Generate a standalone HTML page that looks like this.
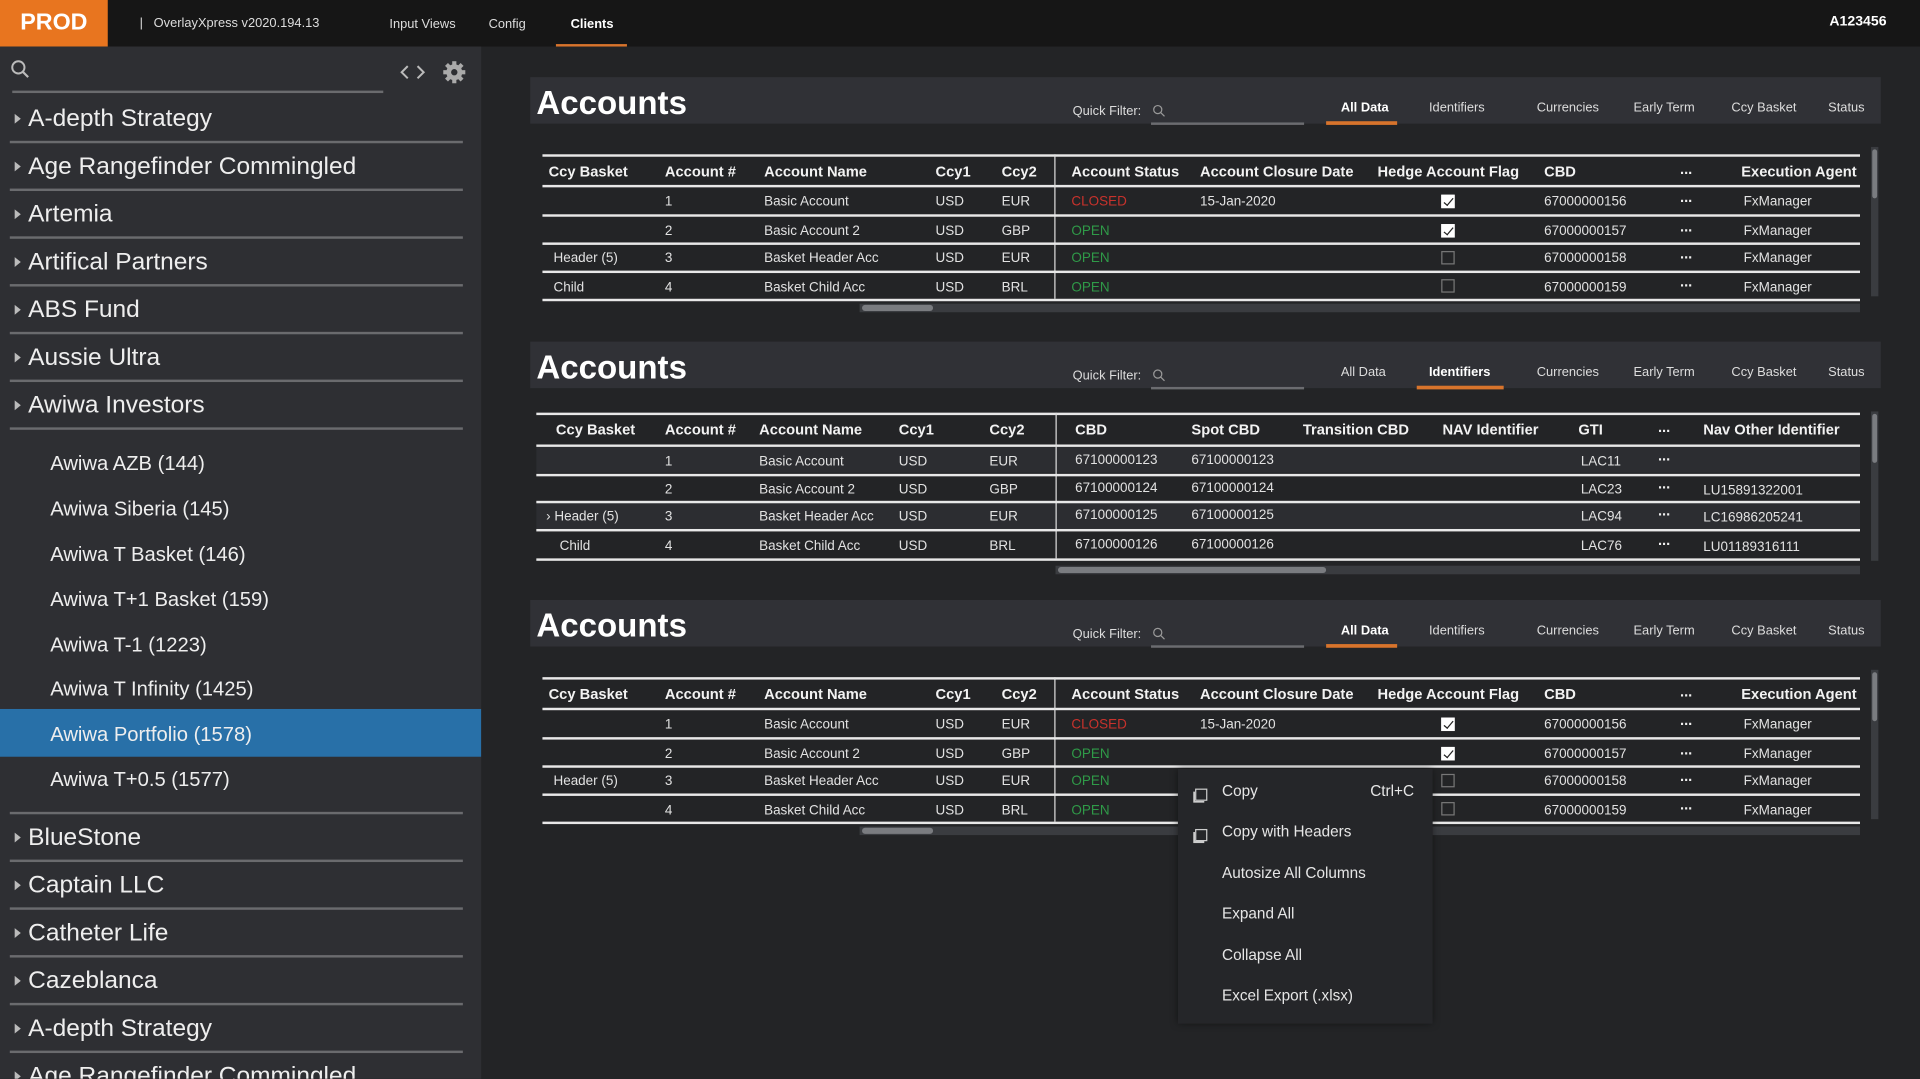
<!DOCTYPE html>
<html><head><meta charset="utf-8">
<style>
html,body{margin:0;padding:0;background:#232426;width:1920px;height:1078px;overflow:hidden}
#w{position:absolute;left:0;top:0;width:1568px;height:881px;transform:scale(1.22449);transform-origin:0 0;font-family:"Liberation Sans",sans-serif;color:#e6e6e6;background:#232426}
.a{position:absolute;white-space:nowrap}
#hdr{position:absolute;left:0;top:0;width:1568px;height:38px;background:#161616}
#prod{position:absolute;left:0;top:0;width:88px;height:38px;background:#e8751f;color:#fff;font-weight:bold;font-size:19px;line-height:38px;text-align:center}
#side{position:absolute;left:0;top:38px;width:393px;height:843px;background:#2e2f33;overflow:hidden}
.ti{position:absolute;left:23px;font-size:20px;color:#eee;margin-top:3px}
.tri{position:absolute;left:12px;width:0;height:0;border-left:5px solid #bbb;border-top:4px solid transparent;border-bottom:4px solid transparent}
.sl{position:absolute;left:8px;width:370px;height:2px;background:#6a6b6e}
.ch{position:absolute;left:41px;font-size:16.5px;color:#eee;margin-top:2px}
.pt{position:absolute;left:433px;width:1103px;height:38px;background:#303136}
.pt .h{position:absolute;left:5px;top:6px;font-size:27px;font-weight:bold;color:#fff}
.pt .qf{position:absolute;left:443px;top:22px;font-size:10.5px;color:#ddd}
.pt .ul{position:absolute;left:507px;top:37px;width:125px;height:2px;background:#6b6c70}
.pt .tab{position:absolute;top:19px;font-size:10.5px;color:#ddd}
.pt .sel{font-weight:bold;color:#fff}
.pt .bar{position:absolute;top:36px;height:3px;background:#d8742c}
.hr{position:absolute;height:1.5px;background:#e8e8e8}
.th{position:absolute;font-size:12px;font-weight:bold;color:#f2f2f2;margin-top:1px}
.td{position:absolute;font-size:11px;color:#e2e2e2;margin-top:1px}
.red{color:#c8322c}.grn{color:#2f9a48}
.cb{position:absolute;width:11px;height:11px;border:1px solid #777;box-sizing:border-box}
.cbk{background:#fff;border-color:#fff}
.cbk:after{content:"";position:absolute;left:3px;top:0px;width:3px;height:7px;border:solid #222;border-width:0 1.5px 1.5px 0;transform:rotate(40deg)}
.vs{position:absolute;width:1px;background:#ddd}
.hs{position:absolute;height:7px;background:#3a3c40}
.hs i{position:absolute;top:1px;height:5px;background:#7a7c80;border-radius:3px}
.vsb{position:absolute;width:6px;background:#3a3c40}
.vsb i{position:absolute;left:1px;top:2px;width:4px;height:40px;background:#7a7c80;border-radius:2px}
#menu{position:absolute;left:962px;top:628px;width:208px;height:208px;background:#252629;box-shadow:0 0 6px rgba(0,0,0,.5)}
#menu .m{position:absolute;left:36px;font-size:12.5px;color:#e6e6e6}
#menu .ic{position:absolute;left:14px;width:8px;height:8px;border:1.2px solid #ccc;box-shadow:-2px 2px 0 -0.5px #ccc}
.dots{position:absolute;font-size:12px;font-weight:bold;color:#eee;letter-spacing:0px}
</style></head><body><div id="w">
<div id="hdr">
<div id="prod">PROD</div>
<div class="a" style="left:114px;top:13px;font-size:10.5px;color:#ddd">|&nbsp;&nbsp;&nbsp;OverlayXpress v2020.194.13</div>
<div class="a" style="left:318px;top:14px;font-size:10.5px;color:#ddd">Input Views</div>
<div class="a" style="left:399px;top:14px;font-size:10.5px;color:#ddd">Config</div>
<div class="a" style="left:466px;top:14px;font-size:10.5px;color:#fff;font-weight:bold">Clients</div>
<div class="a" style="left:454px;top:36px;width:58px;height:2px;background:#d8742c"></div>
<div class="a" style="left:1494px;top:12px;font-size:11.5px;color:#fff;font-weight:bold">A123456</div>
</div>
<div id="side">
<svg class="a" style="left:8px;top:10px" width="18" height="18" viewBox="0 0 18 18"><circle cx="7" cy="7" r="5" stroke="#bbb" stroke-width="1.6" fill="none"/><path d="M10.5 10.5L15 15" stroke="#bbb" stroke-width="1.8"/></svg>
<div class="a" style="left:10px;top:36px;width:303px;height:2px;background:#6a6b6e"></div>
<svg class="a" style="left:325px;top:14px" width="24" height="14" viewBox="0 0 24 14"><path d="M8 2L3 7L8 12M16 2L21 7L16 12" stroke="#bbb" stroke-width="1.6" fill="none"/></svg>
<svg class="a" style="left:361px;top:11px" width="20" height="20" viewBox="0 0 20 20"><g fill="#aaa"><circle cx="10" cy="10" r="6.5"/><rect x="8.3" y="1" width="3.4" height="18"/><rect x="1" y="8.3" width="18" height="3.4"/><rect x="8.3" y="1" width="3.4" height="18" transform="rotate(45 10 10)"/><rect x="8.3" y="1" width="3.4" height="18" transform="rotate(-45 10 10)"/></g><circle cx="10" cy="10" r="2.6" fill="#2e2f33"/></svg>
<div class="tri" style="top:55px"></div><div class="ti" style="top:45px">A-depth Strategy</div><div class="sl" style="top:77px"></div>
<div class="tri" style="top:94px"></div><div class="ti" style="top:84px">Age Rangefinder Commingled</div><div class="sl" style="top:116px"></div>
<div class="tri" style="top:133px"></div><div class="ti" style="top:123px">Artemia</div><div class="sl" style="top:155px"></div>
<div class="tri" style="top:172px"></div><div class="ti" style="top:162px">Artifical Partners</div><div class="sl" style="top:194px"></div>
<div class="tri" style="top:211px"></div><div class="ti" style="top:201px">ABS Fund</div><div class="sl" style="top:233px"></div>
<div class="tri" style="top:250px"></div><div class="ti" style="top:240px">Aussie Ultra</div><div class="sl" style="top:272px"></div>
<div class="tri" style="top:289px"></div><div class="ti" style="top:279px">Awiwa Investors</div><div class="sl" style="top:311px"></div>
<div class="ch" style="top:330px">Awiwa AZB (144)</div>
<div class="ch" style="top:367px">Awiwa Siberia (145)</div>
<div class="ch" style="top:404px">Awiwa T Basket (146)</div>
<div class="ch" style="top:441px">Awiwa T+1 Basket (159)</div>
<div class="ch" style="top:478px">Awiwa T-1 (1223)</div>
<div class="ch" style="top:514px">Awiwa T Infinity (1425)</div>
<div class="a" style="left:0;top:541px;width:393px;height:39px;background:#2870a8"></div>
<div class="ch" style="top:551px">Awiwa Portfolio (1578)</div>
<div class="ch" style="top:588px">Awiwa T+0.5 (1577)</div>
<div class="sl" style="top:625px"></div>
<div class="tri" style="top:642px"></div><div class="ti" style="top:632px">BlueStone</div><div class="sl" style="top:664px"></div>
<div class="tri" style="top:681px"></div><div class="ti" style="top:671px">Captain LLC</div><div class="sl" style="top:703px"></div>
<div class="tri" style="top:720px"></div><div class="ti" style="top:710px">Catheter Life</div><div class="sl" style="top:742px"></div>
<div class="tri" style="top:759px"></div><div class="ti" style="top:749px">Cazeblanca</div><div class="sl" style="top:781px"></div>
<div class="tri" style="top:798px"></div><div class="ti" style="top:788px">A-depth Strategy</div><div class="sl" style="top:820px"></div>
<div class="tri" style="top:837px"></div><div class="ti" style="top:827px">Age Rangefinder Commingled</div>
</div>

<!-- Panel 1 -->
<div class="pt" style="top:63px"><div class="h">Accounts</div><div class="qf">Quick Filter:</div>
<svg class="a" style="left:508px;top:22px" width="11" height="11" viewBox="0 0 11 11"><circle cx="4.5" cy="4.5" r="3.3" stroke="#999" fill="none"/><path d="M7 7L10 10" stroke="#999"/></svg>
<div class="ul"></div>
<div class="tab sel" style="left:662px">All Data</div><div class="bar" style="left:650px;width:58px"></div>
<div class="tab" style="left:734px">Identifiers</div><div class="tab" style="left:822px">Currencies</div><div class="tab" style="left:901px">Early Term</div><div class="tab" style="left:981px">Ccy Basket</div><div class="tab" style="left:1060px">Status</div></div>
<div class="hr" style="left:443px;top:126px;width:1076px"></div>
<div class="th" style="left:448px;top:132px">Ccy Basket</div><div class="th" style="left:543px;top:132px">Account #</div><div class="th" style="left:624px;top:132px">Account Name</div><div class="th" style="left:764px;top:132px">Ccy1</div><div class="th" style="left:818px;top:132px">Ccy2</div><div class="th" style="left:875px;top:132px">Account Status</div><div class="th" style="left:980px;top:132px">Account Closure Date</div><div class="th" style="left:1125px;top:132px">Hedge Account Flag</div><div class="th" style="left:1261px;top:132px">CBD</div><div class="dots" style="left:1372px;top:131px">...</div><div class="th" style="left:1422px;top:132px">Execution Agent</div>
<div class="hr" style="left:443px;top:151px;width:1076px"></div>
<div class="vs" style="left:861px;top:126px;height:118px"></div>
<div class="td" style="left:543px;top:158px">1</div><div class="td" style="left:624px;top:158px">Basic Account</div><div class="td" style="left:764px;top:158px">USD</div><div class="td" style="left:818px;top:158px">EUR</div><div class="td red" style="left:875px;top:158px">CLOSED</div><div class="td" style="left:980px;top:158px">15-Jan-2020</div><div class="cb cbk" style="left:1177px;top:159px"></div><div class="td" style="left:1261px;top:158px">67000000156</div><div class="dots" style="left:1372px;top:154px">...</div><div class="td" style="left:1424px;top:158px">FxManager</div>
<div class="hr" style="left:443px;top:175px;width:1076px"></div>
<div class="td" style="left:543px;top:182px">2</div><div class="td" style="left:624px;top:182px">Basic Account 2</div><div class="td" style="left:764px;top:182px">USD</div><div class="td" style="left:818px;top:182px">GBP</div><div class="td grn" style="left:875px;top:182px">OPEN</div><div class="cb cbk" style="left:1177px;top:183px"></div><div class="td" style="left:1261px;top:182px">67000000157</div><div class="dots" style="left:1372px;top:178px">...</div><div class="td" style="left:1424px;top:182px">FxManager</div>
<div class="hr" style="left:443px;top:198px;width:1076px"></div>
<div class="td" style="left:452px;top:204px">Header (5)</div><div class="td" style="left:543px;top:204px">3</div><div class="td" style="left:624px;top:204px">Basket Header Acc</div><div class="td" style="left:764px;top:204px">USD</div><div class="td" style="left:818px;top:204px">EUR</div><div class="td grn" style="left:875px;top:204px">OPEN</div><div class="cb" style="left:1177px;top:205px"></div><div class="td" style="left:1261px;top:204px">67000000158</div><div class="dots" style="left:1372px;top:200px">...</div><div class="td" style="left:1424px;top:204px">FxManager</div>
<div class="hr" style="left:443px;top:221px;width:1076px"></div>
<div class="td" style="left:452px;top:228px">Child</div><div class="td" style="left:543px;top:228px">4</div><div class="td" style="left:624px;top:228px">Basket Child Acc</div><div class="td" style="left:764px;top:228px">USD</div><div class="td" style="left:818px;top:228px">BRL</div><div class="td grn" style="left:875px;top:228px">OPEN</div><div class="cb" style="left:1177px;top:228px"></div><div class="td" style="left:1261px;top:228px">67000000159</div><div class="dots" style="left:1372px;top:223px">...</div><div class="td" style="left:1424px;top:228px">FxManager</div>
<div class="hr" style="left:443px;top:244px;width:1076px"></div>
<div class="hs" style="left:702px;top:248px;width:817px"><i style="left:2px;width:58px"></i></div>
<div class="vsb" style="left:1528px;top:120px;height:122px"><i></i></div>

<!-- Panel 2 -->
<div class="pt" style="top:279px"><div class="h">Accounts</div><div class="qf">Quick Filter:</div>
<svg class="a" style="left:508px;top:22px" width="11" height="11" viewBox="0 0 11 11"><circle cx="4.5" cy="4.5" r="3.3" stroke="#999" fill="none"/><path d="M7 7L10 10" stroke="#999"/></svg>
<div class="ul"></div>
<div class="tab" style="left:662px">All Data</div>
<div class="tab sel" style="left:734px">Identifiers</div><div class="bar" style="left:724px;width:71px"></div><div class="tab" style="left:822px">Currencies</div><div class="tab" style="left:901px">Early Term</div><div class="tab" style="left:981px">Ccy Basket</div><div class="tab" style="left:1060px">Status</div></div>
<div class="hr" style="left:438px;top:337px;width:1081px"></div>
<div class="th" style="left:454px;top:343px">Ccy Basket</div><div class="th" style="left:543px;top:343px">Account #</div><div class="th" style="left:620px;top:343px">Account Name</div><div class="th" style="left:734px;top:343px">Ccy1</div><div class="th" style="left:808px;top:343px">Ccy2</div><div class="th" style="left:878px;top:343px">CBD</div><div class="th" style="left:973px;top:343px">Spot CBD</div><div class="th" style="left:1064px;top:343px">Transition CBD</div><div class="th" style="left:1178px;top:343px">NAV Identifier</div><div class="th" style="left:1289px;top:343px">GTI</div><div class="dots" style="left:1354px;top:342px">...</div><div class="th" style="left:1391px;top:343px">Nav Other Identifier</div>
<div class="hr" style="left:438px;top:363px;width:1081px"></div>
<div class="a" style="left:438px;top:365px;width:1081px;height:21px;background:#2c2d31"></div>
<div class="a" style="left:438px;top:410px;width:1081px;height:22px;background:#2c2d31"></div>
<div class="vs" style="left:862px;top:337px;height:119px"></div>
<div class="td" style="left:543px;top:370px">1</div><div class="td" style="left:620px;top:370px">Basic Account</div><div class="td" style="left:734px;top:370px">USD</div><div class="td" style="left:808px;top:370px">EUR</div><div class="td" style="left:878px;top:369px">67100000123</div><div class="td" style="left:973px;top:369px">67100000123</div><div class="td" style="left:1291px;top:370px">LAC11</div><div class="dots" style="left:1354px;top:365px">...</div>
<div class="hr" style="left:438px;top:387px;width:1081px"></div>
<div class="td" style="left:543px;top:393px">2</div><div class="td" style="left:620px;top:393px">Basic Account 2</div><div class="td" style="left:734px;top:393px">USD</div><div class="td" style="left:808px;top:393px">GBP</div><div class="td" style="left:878px;top:392px">67100000124</div><div class="td" style="left:973px;top:392px">67100000124</div><div class="td" style="left:1291px;top:393px">LAC23</div><div class="dots" style="left:1354px;top:388px">...</div><div class="td" style="left:1391px;top:394px">LU15891322001</div>
<div class="hr" style="left:438px;top:409px;width:1081px"></div>
<div class="td" style="left:446px;top:415px">&#x203A; Header (5)</div><div class="td" style="left:543px;top:415px">3</div><div class="td" style="left:620px;top:415px">Basket Header Acc</div><div class="td" style="left:734px;top:415px">USD</div><div class="td" style="left:808px;top:415px">EUR</div><div class="td" style="left:878px;top:414px">67100000125</div><div class="td" style="left:973px;top:414px">67100000125</div><div class="td" style="left:1291px;top:415px">LAC94</div><div class="dots" style="left:1354px;top:410px">...</div><div class="td" style="left:1391px;top:416px">LC16986205241</div>
<div class="hr" style="left:438px;top:432px;width:1081px"></div>
<div class="td" style="left:457px;top:439px">Child</div><div class="td" style="left:543px;top:439px">4</div><div class="td" style="left:620px;top:439px">Basket Child Acc</div><div class="td" style="left:734px;top:439px">USD</div><div class="td" style="left:808px;top:439px">BRL</div><div class="td" style="left:878px;top:438px">67100000126</div><div class="td" style="left:973px;top:438px">67100000126</div><div class="td" style="left:1291px;top:439px">LAC76</div><div class="dots" style="left:1354px;top:434px">...</div><div class="td" style="left:1391px;top:440px">LU01189316111</div>
<div class="hr" style="left:438px;top:456px;width:1081px"></div>
<div class="hs" style="left:862px;top:462px;width:657px"><i style="left:2px;width:219px"></i></div>
<div class="vsb" style="left:1528px;top:336px;height:122px"><i></i></div>

<!-- Panel 3 -->
<div class="pt" style="top:490px"><div class="h">Accounts</div><div class="qf">Quick Filter:</div>
<svg class="a" style="left:508px;top:22px" width="11" height="11" viewBox="0 0 11 11"><circle cx="4.5" cy="4.5" r="3.3" stroke="#999" fill="none"/><path d="M7 7L10 10" stroke="#999"/></svg>
<div class="ul"></div>
<div class="tab sel" style="left:662px">All Data</div><div class="bar" style="left:650px;width:58px"></div>
<div class="tab" style="left:734px">Identifiers</div><div class="tab" style="left:822px">Currencies</div><div class="tab" style="left:901px">Early Term</div><div class="tab" style="left:981px">Ccy Basket</div><div class="tab" style="left:1060px">Status</div></div>
<div class="hr" style="left:443px;top:553px;width:1076px"></div>
<div class="th" style="left:448px;top:559px">Ccy Basket</div><div class="th" style="left:543px;top:559px">Account #</div><div class="th" style="left:624px;top:559px">Account Name</div><div class="th" style="left:764px;top:559px">Ccy1</div><div class="th" style="left:818px;top:559px">Ccy2</div><div class="th" style="left:875px;top:559px">Account Status</div><div class="th" style="left:980px;top:559px">Account Closure Date</div><div class="th" style="left:1125px;top:559px">Hedge Account Flag</div><div class="th" style="left:1261px;top:559px">CBD</div><div class="dots" style="left:1372px;top:558px">...</div><div class="th" style="left:1422px;top:559px">Execution Agent</div>
<div class="hr" style="left:443px;top:578px;width:1076px"></div>
<div class="vs" style="left:861px;top:553px;height:118px"></div>
<div class="td" style="left:543px;top:585px">1</div><div class="td" style="left:624px;top:585px">Basic Account</div><div class="td" style="left:764px;top:585px">USD</div><div class="td" style="left:818px;top:585px">EUR</div><div class="td red" style="left:875px;top:585px">CLOSED</div><div class="td" style="left:980px;top:585px">15-Jan-2020</div><div class="cb cbk" style="left:1177px;top:586px"></div><div class="td" style="left:1261px;top:585px">67000000156</div><div class="dots" style="left:1372px;top:581px">...</div><div class="td" style="left:1424px;top:585px">FxManager</div>
<div class="hr" style="left:443px;top:602px;width:1076px"></div>
<div class="td" style="left:543px;top:609px">2</div><div class="td" style="left:624px;top:609px">Basic Account 2</div><div class="td" style="left:764px;top:609px">USD</div><div class="td" style="left:818px;top:609px">GBP</div><div class="td grn" style="left:875px;top:609px">OPEN</div><div class="cb cbk" style="left:1177px;top:610px"></div><div class="td" style="left:1261px;top:609px">67000000157</div><div class="dots" style="left:1372px;top:605px">...</div><div class="td" style="left:1424px;top:609px">FxManager</div>
<div class="hr" style="left:443px;top:625px;width:1076px"></div>
<div class="td" style="left:452px;top:631px">Header (5)</div><div class="td" style="left:543px;top:631px">3</div><div class="td" style="left:624px;top:631px">Basket Header Acc</div><div class="td" style="left:764px;top:631px">USD</div><div class="td" style="left:818px;top:631px">EUR</div><div class="td grn" style="left:875px;top:631px">OPEN</div><div class="cb" style="left:1177px;top:632px"></div><div class="td" style="left:1261px;top:631px">67000000158</div><div class="dots" style="left:1372px;top:627px">...</div><div class="td" style="left:1424px;top:631px">FxManager</div>
<div class="hr" style="left:443px;top:648px;width:1076px"></div>
<div class="td" style="left:543px;top:655px">4</div><div class="td" style="left:624px;top:655px">Basket Child Acc</div><div class="td" style="left:764px;top:655px">USD</div><div class="td" style="left:818px;top:655px">BRL</div><div class="td grn" style="left:875px;top:655px">OPEN</div><div class="cb" style="left:1177px;top:655px"></div><div class="td" style="left:1261px;top:655px">67000000159</div><div class="dots" style="left:1372px;top:650px">...</div><div class="td" style="left:1424px;top:655px">FxManager</div>
<div class="hr" style="left:443px;top:671px;width:1076px"></div>
<div class="hs" style="left:702px;top:675px;width:817px"><i style="left:2px;width:58px"></i></div>
<div class="vsb" style="left:1528px;top:547px;height:122px"><i></i></div>

<div id="menu">
<div class="ic" style="top:16px"></div><div class="m" style="top:11px">Copy</div><div class="m" style="left:157px;top:11px">Ctrl+C</div>
<div class="ic" style="top:49px"></div><div class="m" style="top:44px">Copy with Headers</div>
<div class="m" style="top:78px">Autosize All Columns</div>
<div class="m" style="top:111px">Expand All</div>
<div class="m" style="top:145px">Collapse All</div>
<div class="m" style="top:178px">Excel Export (.xlsx)</div>
</div>
</div></body></html>
